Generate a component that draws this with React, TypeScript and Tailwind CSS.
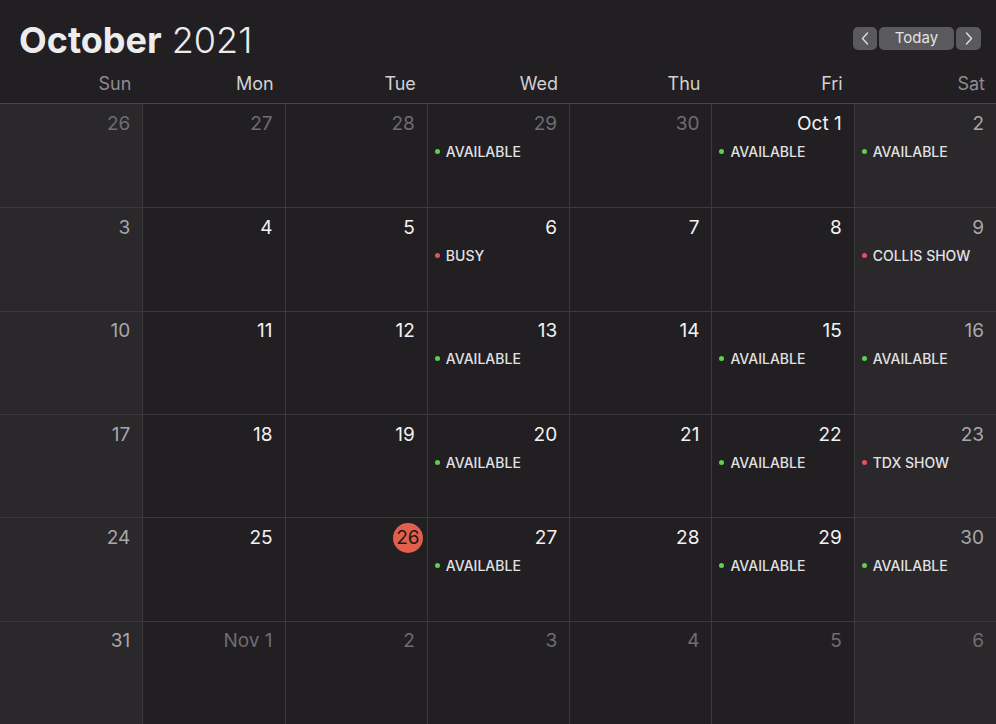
import React from 'react';

type Ev = { label: string; kind: 'ok' | 'busy' };
type Day = { n: string; out?: boolean; today?: boolean; ev?: Ev };

const A: Ev = { label: 'AVAILABLE', kind: 'ok' };

const weeks: Day[][] = [
  [
    { n: '26', out: true },
    { n: '27', out: true },
    { n: '28', out: true },
    { n: '29', out: true, ev: A },
    { n: '30', out: true },
    { n: 'Oct 1', ev: A },
    { n: '2', ev: A },
  ],
  [
    { n: '3' },
    { n: '4' },
    { n: '5' },
    { n: '6', ev: { label: 'BUSY', kind: 'busy' } },
    { n: '7' },
    { n: '8' },
    { n: '9', ev: { label: 'COLLIS SHOW', kind: 'busy' } },
  ],
  [
    { n: '10' },
    { n: '11' },
    { n: '12' },
    { n: '13', ev: A },
    { n: '14' },
    { n: '15', ev: A },
    { n: '16', ev: A },
  ],
  [
    { n: '17' },
    { n: '18' },
    { n: '19' },
    { n: '20', ev: A },
    { n: '21' },
    { n: '22', ev: A },
    { n: '23', ev: { label: 'TDX SHOW', kind: 'busy' } },
  ],
  [
    { n: '24' },
    { n: '25' },
    { n: '26', today: true },
    { n: '27', ev: A },
    { n: '28' },
    { n: '29', ev: A },
    { n: '30', ev: A },
  ],
  [
    { n: '31' },
    { n: 'Nov 1', out: true },
    { n: '2', out: true },
    { n: '3', out: true },
    { n: '4', out: true },
    { n: '5', out: true },
    { n: '6', out: true },
  ],
];

const weekdays = ['Sun', 'Mon', 'Tue', 'Wed', 'Thu', 'Fri', 'Sat'];

function Cell({ d, col, row }: { d: Day; col: number; row: number }) {
  const weekend = col === 0 || col === 6;
  const numColor = d.out
    ? 'text-[#6f6d71]'
    : weekend
      ? 'text-[#a8a7aa]'
      : 'text-[#f2f2f2]';
  return (
    <div
      className={`flex flex-col ${weekend ? 'bg-[#2a282b]' : 'bg-[#211f22]'} ${
        col > 0 ? 'border-l border-[#3b393c]' : ''
      } ${row > 0 ? 'border-t border-[#3b393c]' : ''}`}
    >
      <div className="mt-[5px] flex h-[30px] justify-end pr-[4px]">
        {d.today ? (
          <span className="flex h-[30px] w-[30px] items-center justify-center rounded-full bg-[#e2604b] text-[19px] text-[#1a1a1a]">
            {d.n}
          </span>
        ) : (
          <span className={`flex h-[30px] items-center pr-[8px] text-[19px] ${numColor}`}>{d.n}</span>
        )}
      </div>
      {d.ev && (
        <div className="mt-[3px] flex h-[18px] items-center gap-[6px] pl-[7px]">
          <span
            className={`h-[5px] w-[5px] rounded-full ${
              d.ev.kind === 'ok' ? 'bg-[#5fcf4e]' : 'bg-[#e5505e]'
            }`}
          />
          <span className="text-[14px] font-medium text-[#e2e1e3]">{d.ev.label}</span>
        </div>
      )}
    </div>
  );
}

export default function App() {
  return (
    <div
      className="flex h-[724px] w-[996px] flex-col overflow-hidden bg-[#211f22]"
      style={{ fontFamily: 'Inter, "Noto Sans", sans-serif' }}
    >
      {/* Title bar */}
      <div className="flex h-[64px] items-start justify-between">
        <h1 className="pl-[19px] pt-[18px] text-[36px] leading-[44px] text-[#ececec]">
          <span className="font-bold">October</span> <span className="font-light">2021</span>
        </h1>
        <div className="mr-[15px] mt-[27px] flex gap-[2px]">
          <button className="flex h-[23px] w-[24px] items-center justify-center rounded-[5px] bg-[#5a595c] text-[#dedede]">
            <svg width="8" height="13" viewBox="0 0 8 13" fill="none">
              <path d="M6.5 1 1.5 6.5 6.5 12" stroke="currentColor" strokeWidth="1.4" strokeLinecap="round" strokeLinejoin="round" />
            </svg>
          </button>
          <button className="flex h-[23px] w-[75px] items-center justify-center rounded-[5px] bg-[#5a595c] text-[15px] text-[#e2e2e2]">
            Today
          </button>
          <button className="flex h-[23px] w-[25px] items-center justify-center rounded-[5px] bg-[#5a595c] text-[#dedede]">
            <svg width="8" height="13" viewBox="0 0 8 13" fill="none">
              <path d="M1.5 1 6.5 6.5 1.5 12" stroke="currentColor" strokeWidth="1.4" strokeLinecap="round" strokeLinejoin="round" />
            </svg>
          </button>
        </div>
      </div>

      {/* Weekday labels */}
      <div className="grid h-[40px] grid-cols-7 border-b border-[#48464a]">
        {weekdays.map((w, i) => (
          <div
            key={w}
            className={`pr-[11px] pt-[6px] text-right text-[18px] ${
              i === 0 || i === 6 ? 'text-[#8e8d90]' : 'text-[#d2d1d3]'
            }`}
          >
            {w}
          </div>
        ))}
      </div>

      {/* Month grid */}
      <div className="grid flex-1 grid-cols-7 grid-rows-6">
        {weeks.map((wk, r) => wk.map((d, c) => <Cell key={`${r}-${c}`} d={d} col={c} row={r} />))}
      </div>
    </div>
  );
}
